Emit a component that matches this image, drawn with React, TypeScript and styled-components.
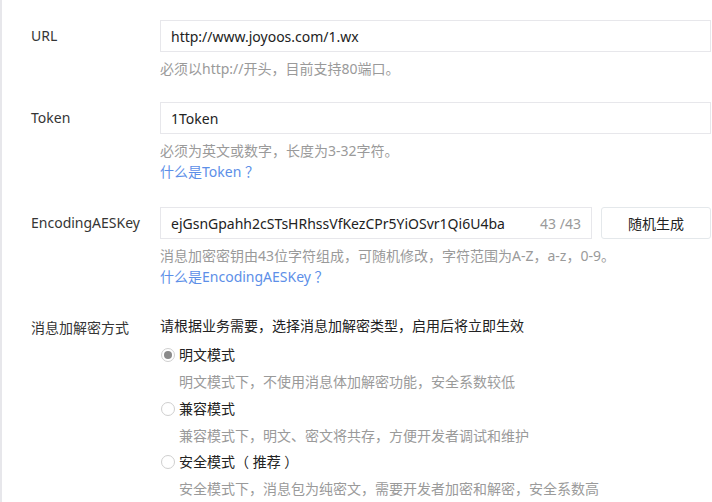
import React, { useState } from "react";
import styled, { createGlobalStyle } from "styled-components";

const GlobalStyle = createGlobalStyle`
  body {
    margin: 0;
    background: #ffffff;
    font-family: "Noto Sans", "Noto Sans CJK SC", sans-serif;
    font-size: 14px;
    color: #353535;
  }
`;

const Page = styled.div`
  width: 710px;
  min-height: 482px;
  border-left: 2px solid #e7e7eb;
  padding-top: 20px;
`;

const Row = styled.div<{ gap?: number }>`
  display: grid;
  grid-template-columns: 158px 551px;
  margin-bottom: ${(p) => (p.gap ?? 24)}px;
`;

const Label = styled.div<{ lh?: number }>`
  padding-left: 29px;
  line-height: ${(p) => p.lh ?? 32}px;
  color: #353535;
`;

const Field = styled.div`
  display: flex;
  flex-direction: column;
`;

const InputLine = styled.div`
  display: flex;
  gap: 9px;
`;

const InputBox = styled.div`
  flex: 1 1 auto;
  display: flex;
  align-items: center;
  height: 32px;
  min-height: 32px;
  box-sizing: border-box;
  border: 1px solid #e7e7eb;
  padding: 0 10px;
`;

const TextInput = styled.input`
  flex: 1;
  min-width: 0;
  border: none;
  outline: none;
  padding: 0;
  font: inherit;
  color: #222222;
  background: transparent;
`;

const Counter = styled.span`
  color: #9a9a9a;
  margin-left: 10px;
`;

const GhostButton = styled.button`
  flex: none;
  width: 110px;
  height: 32px;
  border: 1px solid #e4e8eb;
  border-radius: 3px;
  background: #ffffff;
  font: inherit;
  color: #222222;
  cursor: pointer;
`;

const Hint = styled.div<{ first?: boolean }>`
  color: #9a9a9a;
  line-height: 21px;
  margin-top: ${(p) => (p.first ? 6 : 0)}px;
`;

const HelpLink = styled.a`
  color: #5d8fe8;
  line-height: 21px;
  text-decoration: none;
`;

const Intro = styled.div`
  line-height: 26px;
  margin-bottom: 3px;
  color: #222222;
`;

const RadioItem = styled.label`
  display: flex;
  align-items: center;
  gap: 4px;
  line-height: 26px;
  color: #222222;
  cursor: pointer;
`;

const RadioDot = styled.span<{ checked: boolean }>`
  width: 12px;
  height: 12px;
  margin-left: 1px;
  border-radius: 50%;
  border: 1px solid #cfcfcf;
  background: #ffffff;
  display: flex;
  align-items: center;
  justify-content: center;
  &::after {
    content: "";
    width: 8px;
    height: 8px;
    border-radius: 50%;
    background: ${(p) => (p.checked ? "#8a8a8a" : "transparent")};
  }
`;

const RadioDesc = styled.div`
  padding-left: 19px;
  line-height: 27.5px;
  color: #9a9a9a;
`;

const modes = [
  { name: "明文模式", desc: "明文模式下，不使用消息体加解密功能，安全系数较低" },
  { name: "兼容模式", desc: "兼容模式下，明文、密文将共存，方便开发者调试和维护" },
  { name: "安全模式（ 推荐 ）", desc: "安全模式下，消息包为纯密文，需要开发者加密和解密，安全系数高" },
];

export default function App() {
  const [url, setUrl] = useState("http://www.joyoos.com/1.wx");
  const [token, setToken] = useState("1Token");
  const [aesKey, setAesKey] = useState("ejGsnGpahh2cSTsHRhssVfKezCPr5YiOSvr1Qi6U4ba");
  const [mode, setMode] = useState(0);

  return (
    <Page>
      <GlobalStyle />
      <Row gap={23}>
        <Label>URL</Label>
        <Field>
          <InputBox>
            <TextInput value={url} onChange={(e) => setUrl(e.target.value)} />
          </InputBox>
          <Hint first>必须以http://开头，目前支持80端口。</Hint>
        </Field>
      </Row>
      <Row gap={25}>
        <Label>Token</Label>
        <Field>
          <InputBox>
            <TextInput value={token} onChange={(e) => setToken(e.target.value)} />
          </InputBox>
          <Hint first>必须为英文或数字，长度为3-32字符。</Hint>
          <HelpLink href="#">什么是Token ？</HelpLink>
        </Field>
      </Row>
      <Row gap={26}>
        <Label>EncodingAESKey</Label>
        <Field>
          <InputLine>
            <InputBox>
              <TextInput
                value={aesKey}
                maxLength={43}
                onChange={(e) => setAesKey(e.target.value)}
              />
              <Counter>{aesKey.length} /43</Counter>
            </InputBox>
            <GhostButton>随机生成</GhostButton>
          </InputLine>
          <Hint first>消息加密密钥由43位字符组成，可随机修改，字符范围为A-Z，a-z，0-9。</Hint>
          <HelpLink href="#">什么是EncodingAESKey ？</HelpLink>
        </Field>
      </Row>
      <Row gap={0}>
        <Label lh={30}>消息加解密方式</Label>
        <Field>
          <Intro>请根据业务需要，选择消息加解密类型，启用后将立即生效</Intro>
          {modes.map((m, i) => (
            <div key={m.name}>
              <RadioItem onClick={() => setMode(i)}>
                <RadioDot checked={mode === i} />
                {m.name}
              </RadioItem>
              <RadioDesc>{m.desc}</RadioDesc>
            </div>
          ))}
        </Field>
      </Row>
    </Page>
  );
}
